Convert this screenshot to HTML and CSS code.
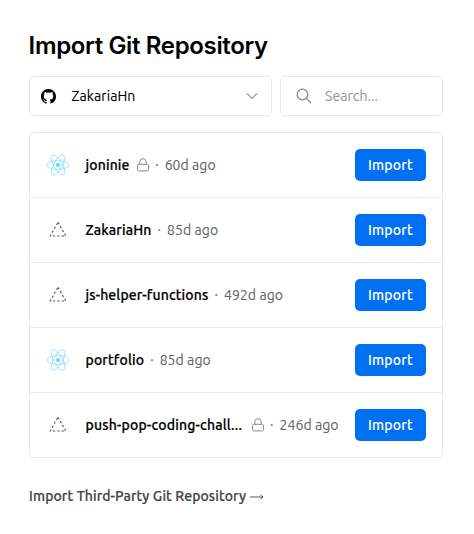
FILE: index.html
```html
<!DOCTYPE html>
<html lang="en">
<head>
<meta charset="utf-8">
<title>Import Git Repository</title>
<link rel="stylesheet" href="styles.css">
</head>
<body>
<svg class="defs" aria-hidden="true">
  <symbol id="react" viewBox="0 0 24 24">
    <g fill="none" stroke="#61dafb" stroke-width=".6">
      <ellipse cx="12" cy="12" rx="11.4" ry="4.3"/>
      <ellipse cx="12" cy="12" rx="11.4" ry="4.3" transform="rotate(60 12 12)"/>
      <ellipse cx="12" cy="12" rx="11.4" ry="4.3" transform="rotate(120 12 12)"/>
    </g>
    <circle cx="12" cy="12" r="2.1" fill="#61dafb"/>
  </symbol>
  <symbol id="triangle" viewBox="0 0 24 24">
    <path d="M12 4.3 19.8 18H4.2Z" fill="none" stroke="#555" stroke-width="1.1" stroke-dasharray="2.3 2.1"/>
  </symbol>
  <symbol id="lock" viewBox="0 0 14 14">
    <g fill="none" stroke="#888" stroke-width="1"><rect x="1.5" y="6.3" width="11" height="6.6" rx="1.2"/><path d="M3.8 6.3V3.9a3.2 3.2 0 0 1 6.4 0v2.4"/></g>
  </symbol>
</svg>
<main class="panel">
  <h1 class="title">Import Git Repository</h1>
  <div class="controls">
    <div class="field account">
      <svg class="github" viewBox="0 0 16 16"><path fill="#000" fill-rule="evenodd" d="M8 0C3.58 0 0 3.58 0 8c0 3.54 2.29 6.53 5.47 7.59.4.07.55-.17.55-.38 0-.19-.01-.82-.01-1.49-2.01.37-2.53-.49-2.69-.94-.09-.23-.48-.94-.82-1.13-.28-.15-.68-.52-.01-.53.63-.01 1.08.58 1.23.82.72 1.21 1.87.87 2.33.66.07-.52.28-.87.51-1.07-1.78-.2-3.64-.89-3.64-3.95 0-.87.31-1.59.82-2.15-.08-.2-.36-1.02.08-2.12 0 0 .67-.21 2.2.82a7.6 7.6 0 0 1 4 0c1.53-1.04 2.2-.82 2.2-.82.44 1.1.16 1.92.08 2.12.51.56.82 1.27.82 2.15 0 3.07-1.87 3.75-3.65 3.95.29.25.54.73.54 1.48 0 1.07-.01 1.93-.01 2.2 0 .21.15.46.55.38A8.01 8.01 0 0 0 16 8c0-4.42-3.58-8-8-8Z"/></svg>
      <span class="account-name">ZakariaHn</span>
      <svg class="chevron" viewBox="0 0 12 8"><path d="m1 1.5 5 5 5-5" fill="none" stroke="#999" stroke-width="1.2"/></svg>
    </div>
    <div class="field search">
      <svg class="magnifier" viewBox="0 0 16 16"><g fill="none" stroke="#888" stroke-width="1.3"><circle cx="6.5" cy="6.5" r="5.3"/><path d="m10.4 10.4 4.6 4.6"/></g></svg>
      <span class="placeholder">Search...</span>
    </div>
  </div>
  <ul class="repos">
    <li class="repo"><svg class="logo"><use href="#react"/></svg><span class="name">joninie</span><svg class="lock"><use href="#lock"/></svg><span class="dot">·</span><span class="age">60d ago</span><button class="import">Import</button></li>
    <li class="repo"><svg class="logo"><use href="#triangle"/></svg><span class="name">ZakariaHn</span><span class="dot">·</span><span class="age">85d ago</span><button class="import">Import</button></li>
    <li class="repo"><svg class="logo"><use href="#triangle"/></svg><span class="name">js-helper-functions</span><span class="dot">·</span><span class="age">492d ago</span><button class="import">Import</button></li>
    <li class="repo"><svg class="logo"><use href="#react"/></svg><span class="name">portfolio</span><span class="dot">·</span><span class="age">85d ago</span><button class="import">Import</button></li>
    <li class="repo"><svg class="logo"><use href="#triangle"/></svg><span class="name truncated">push-pop-coding-chall...</span><svg class="lock"><use href="#lock"/></svg><span class="dot">·</span><span class="age">246d ago</span><button class="import">Import</button></li>
  </ul>
  <a class="third-party"><span>Import Third-Party Git Repository</span><svg class="arrow" viewBox="0 0 14 8"><path d="M0 5h13M10.3 2.5l2.5 2.5L10.3 7.5" fill="none" stroke="#444" stroke-width=".9"/></svg></a>
</main>
</body>
</html>
```

FILE: styles.css
```css
* { box-sizing: border-box; }
body { margin: 0; background: #fff; color: #000; font: 14px/20px Ubuntu, "Noto Sans", sans-serif; }
.defs { position: absolute; width: 0; height: 0; }
svg { flex: none; }
.panel { width: 414px; margin-left: 29px; padding-top: 28px; }
.title { margin: 0 0 12px -0.4px; font: 600 24px/36px Inter, sans-serif; letter-spacing: -0.35px; white-space: nowrap; }
.controls { display: flex; gap: 8px; margin-bottom: 16px; }
.field { display: flex; align-items: center; height: 40px; border: 1px solid #eaeaea; border-radius: 5px; }
.account { width: 243px; padding: 0 13px 0 11px; }
.search { width: 163px; padding-left: 15px; }
.github { width: 15px; height: 15px; margin-right: 15.5px; }
.account-name { letter-spacing: 0.1px; -webkit-text-stroke: 0.12px; white-space: nowrap; }
.chevron { width: 12px; height: 8px; margin-left: auto; }
.magnifier { width: 16px; height: 16px; margin-right: 13px; }
.placeholder { color: #999; letter-spacing: 0.08px; -webkit-text-stroke: 0.12px; }
.repos { margin: 0; padding: 0; list-style: none; border: 1px solid #eaeaea; border-radius: 5px; }
.repo { display: flex; align-items: center; height: 64px; padding: 0 16px; white-space: nowrap; }
.repo + .repo { height: 65px; border-top: 1px solid #eaeaea; }
.logo { width: 24px; height: 24px; margin-right: 15.5px; }
.name { font-weight: 500; letter-spacing: 0.14px; -webkit-text-stroke: 0.22px; }
.truncated { width: 159px; letter-spacing: 0.19px; }
.lock { width: 14px; height: 14px; margin-left: 6px; margin-right: -0.5px; }
.dot { width: 4px; margin: 0 5.5px 0 6px; color: #666; -webkit-text-stroke: 0.2px; }
.age { color: #666; letter-spacing: 0.07px; -webkit-text-stroke: 0.12px; }
.import { width: 71px; height: 32px; margin-left: auto; padding: 0; border: 0; border-radius: 5px; background: #0070f3; color: #fff; font: inherit; font-weight: 500; letter-spacing: 0.2px; -webkit-text-stroke: 0.1px; }
.third-party { display: flex; align-items: center; margin-top: 28px; color: #444; font-weight: 500; letter-spacing: 0.09px; -webkit-text-stroke: 0.2px; white-space: nowrap; }
.arrow { width: 14px; height: 8px; margin-left: 4px; }
```
